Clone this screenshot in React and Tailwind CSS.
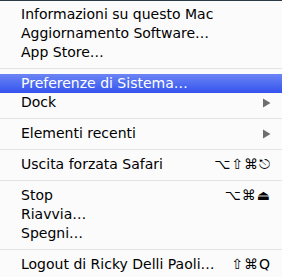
import React from "react";

const Item = ({ label, shortcut, arrow, active }) => (
  <div
    className={`flex h-[19px] items-center justify-between pl-[21px] pr-[11px] ${
      active ? "bg-gradient-to-b from-[#6c84f4] to-[#3552ee] text-white" : "text-black"
    }`}
  >
    <span className="whitespace-nowrap">{label}</span>
    {shortcut && <span className="whitespace-nowrap tracking-[1px]">{shortcut}</span>}
    {arrow && (
      <svg width="9" height="10" viewBox="0 0 9 10" className="mr-[0px]">
        <path d="M1 0.5 L8.5 5 L1 9.5 Z" fill="#6e6e6e" />
      </svg>
    )}
  </div>
);

const Sep = () => (
  <div className="flex h-[12px] items-center">
    <div className="h-px w-full bg-[#e3e3e3]" />
  </div>
);

export default function App() {
  return (
    <div
      className="h-[277px] w-[282px] overflow-hidden border-t border-[#2b3a44] bg-[#fbfbfb] pt-[4px] text-[14px] leading-[19px]"
      style={{ fontFamily: '"DejaVu Sans", "Noto Sans", sans-serif' }}
    >
      <Item label="Informazioni su questo Mac" />
      <Item label="Aggiornamento Software…" />
      <Item label="App Store…" />
      <Sep />
      <Item label="Preferenze di Sistema…" active />
      <Item label="Dock" arrow />
      <Sep />
      <Item label="Elementi recenti" arrow />
      <Sep />
      <Item label="Uscita forzata Safari" shortcut="⌥⇧⌘⎋" />
      <Sep />
      <Item label="Stop" shortcut="⌥⌘⏏" />
      <Item label="Riavvia…" />
      <Item label="Spegni…" />
      <Sep />
      <Item label="Logout di Ricky Delli Paoli…" shortcut="⇧⌘Q" />
    </div>
  );
}
